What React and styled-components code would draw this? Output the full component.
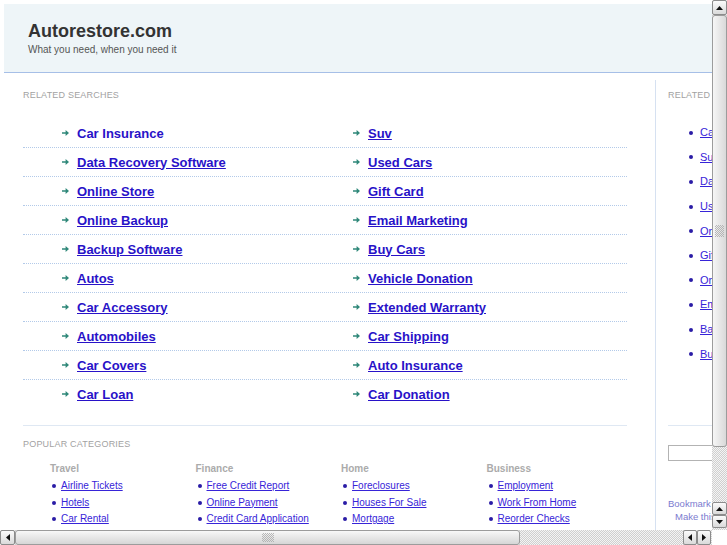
import React from "react";
import styled, { createGlobalStyle } from "styled-components";

const Global = createGlobalStyle`
  html, body { margin: 0; padding: 0; background: #fff; overflow: hidden; }
  body { font-family: "Liberation Sans", Arial, sans-serif; }
  * { box-sizing: border-box; }
`;

const Window = styled.div`
  width: 727px;
  height: 545px;
  display: grid;
  grid-template-columns: 712px 15px;
  grid-template-rows: 530px 15px;
  background: #fff;
`;

const Viewport = styled.div`
  overflow: hidden;
`;

const Page = styled.div`
  width: 980px;
`;

const Header = styled.header`
  margin: 4px 0 0 4px;
  background: #eef5f8;
  border-bottom: 1px solid #a6bfe7;
  padding: 16px 0 15px 24px;
`;

const Title = styled.h1`
  margin: 0;
  font-size: 18px;
  line-height: 22px;
  font-weight: bold;
  color: #333;
`;

const Tagline = styled.div`
  font-size: 10px;
  line-height: 14px;
  padding-top: 1px;
  color: #555;
`;

const Body = styled.div`
  display: flex;
  align-items: flex-start;
`;

const Main = styled.main`
  margin-left: 23px;
  width: 604px;
  padding-top: 16px;
  flex: none;
`;

const SectionLabel = styled.div`
  font-size: 9px;
  line-height: 12px;
  color: #a2a2a2;
  text-transform: uppercase;
  letter-spacing: 0.2px;
  white-space: nowrap;
  margin-top: ${(p) => p.$top || 0}px;
`;

const RelatedList = styled.div`
  margin-top: 18px;
`;

const Row = styled.div`
  display: grid;
  grid-template-columns: 291px 1fr;
  height: 29px;
  border-bottom: 1px dotted #b3cae9;
  &:last-child {
    height: 28px;
    border-bottom: none;
  }
`;

const Cell = styled.div`
  display: flex;
  align-items: center;
  padding-left: 39px;
`;

const ArrowIcon = styled.svg`
  width: 7px;
  height: 6px;
  margin-right: 8px;
  flex: none;
`;

const BigLink = styled.a`
  font-size: 13px;
  font-weight: bold;
  color: #2812c8;
  text-decoration: ${(p) => (p.$plain ? "none" : "underline")};
  white-space: nowrap;
  cursor: pointer;
`;

const Rule = styled.div`
  height: 1px;
  background: #dfe8f3;
  margin-top: ${(p) => p.$top}px;
`;

const CatGrid = styled.div`
  margin-top: 11px;
  padding-left: 27px;
  display: grid;
  grid-template-columns: repeat(4, 145.5px);
`;

const CatHeading = styled.div`
  font-size: 10px;
  line-height: 16.5px;
  font-weight: bold;
  color: #ababab;
`;

const CatList = styled.ul`
  list-style: none;
  margin: 0;
  padding: 0;
`;

const CatItem = styled.li`
  display: flex;
  align-items: center;
  height: 16.5px;
`;

const Bullet = styled.span`
  width: 4px;
  height: 4px;
  border-radius: 50%;
  background: #2a1ca6;
  flex: none;
  margin: 1px ${(p) => p.$gap}px 0 ${(p) => p.$left}px;
`;

const SmallLink = styled.a`
  font-size: ${(p) => p.$size || 10}px;
  color: #3724d8;
  text-decoration: underline;
  white-space: nowrap;
  cursor: pointer;
`;

const Sidebar = styled.aside`
  margin: 7px 0 0 28px;
  border-left: 1px solid #d6e1f1;
  padding: 9px 0 0 12px;
  width: 230px;
  min-height: 470px;
  flex: none;
`;

const SideList = styled.ul`
  list-style: none;
  margin: 19px 0 0;
  padding: 0 0 0 21px;
`;

const SideItem = styled.li`
  display: flex;
  align-items: center;
  height: 24.6px;
`;

const SearchInput = styled.input`
  display: block;
  margin-top: 19px;
  width: 150px;
  height: 16px;
  border: 1px solid #b3b3b3;
  padding: 0;
`;

const SideNote = styled.div`
  font-size: 9.5px;
  line-height: 13px;
  color: #7b7bcf;
  white-space: nowrap;
  margin-top: ${(p) => p.$top || 0}px;
  padding-left: ${(p) => p.$indent || 0}px;
`;

/* Scrollbars */
const trackPattern = `
  background-color: #ececec;
  background-image: repeating-conic-gradient(#cfcfcf 0 25%, #f4f4f4 0 50%);
  background-size: 2px 2px;
`;

const VBar = styled.div`
  display: flex;
  flex-direction: column;
  ${trackPattern}
`;

const HBar = styled.div`
  display: flex;
  ${trackPattern}
`;

const Corner = styled.div`
  background: #fff;
`;

const ScrollButton = styled.div`
  flex: none;
  width: ${(p) => p.$w}px;
  height: ${(p) => p.$h}px;
  border: 1px solid #8c8c8c;
  border-radius: 2px;
  background: linear-gradient(#fbfbfb, #dadada);
  display: flex;
  align-items: center;
  justify-content: center;
`;

const Thumb = styled.div`
  flex: none;
  width: ${(p) => p.$w};
  height: ${(p) => p.$h};
  border: 1px solid #9c9c9c;
  border-radius: 3px;
  background: ${(p) =>
    p.$vertical
      ? "linear-gradient(90deg, #f6f6f6, #d9d9d9)"
      : "linear-gradient(#f8f8f8, #d6d6d6)"};
  display: flex;
  align-items: center;
  justify-content: center;
`;

const Grip = styled.div`
  width: ${(p) => p.$w}px;
  height: ${(p) => p.$h}px;
  background-image: repeating-conic-gradient(#a9a9a9 0 25%, transparent 0 50%);
  background-size: 2px 2px;
  opacity: 0.8;
`;

const TrackFill = styled.div`
  flex: 1;
`;

const Spacer = styled.div`
  flex: none;
  width: ${(p) => p.$w || 0}px;
  height: ${(p) => p.$h || 0}px;
`;

const Tri = ({ dir }) => {
  const pts = {
    up: "0,4 3.5,0 7,4",
    down: "0,0 3.5,4 7,0",
    left: "4,0 0,3.5 4,7",
    right: "0,0 4,3.5 0,7",
  }[dir];
  const vert = dir === "up" || dir === "down";
  return (
    <svg width={vert ? 7 : 4} height={vert ? 4 : 7} viewBox={vert ? "0 0 7 4" : "0 0 4 7"}>
      <polygon points={pts} fill="#111" />
    </svg>
  );
};

const Arrow = () => (
  <ArrowIcon viewBox="0 0 7 6">
    <path d="M0 2.2h3.6V0L7 3 3.6 6V3.8H0z" fill="#2f8879" />
  </ArrowIcon>
);

const related = [
  ["Car Insurance", "Suv"],
  ["Data Recovery Software", "Used Cars"],
  ["Online Store", "Gift Card"],
  ["Online Backup", "Email Marketing"],
  ["Backup Software", "Buy Cars"],
  ["Autos", "Vehicle Donation"],
  ["Car Accessory", "Extended Warranty"],
  ["Automobiles", "Car Shipping"],
  ["Car Covers", "Auto Insurance"],
  ["Car Loan", "Car Donation"],
];

const sideLinks = [
  "Car Insurance",
  "Suv",
  "Data Recovery Software",
  "Used Cars",
  "Online Store",
  "Gift Card",
  "Online Backup",
  "Email Marketing",
  "Backup Software",
  "Buy Cars",
];

const categories = [
  { name: "Travel", links: ["Airline Tickets", "Hotels", "Car Rental"] },
  { name: "Finance", links: ["Free Credit Report", "Online Payment", "Credit Card Application"] },
  { name: "Home", links: ["Foreclosures", "Houses For Sale", "Mortgage"] },
  { name: "Business", links: ["Employment", "Work From Home", "Reorder Checks"] },
];

export default function App() {
  return (
    <>
      <Global />
      <Window>
        <Viewport>
          <Page>
            <Header>
              <Title>Autorestore.com</Title>
              <Tagline>What you need, when you need it</Tagline>
            </Header>
            <Body>
              <Main>
                <SectionLabel>Related Searches</SectionLabel>
                <RelatedList>
                  {related.map((pair, i) => (
                    <Row key={i}>
                      {pair.map((label, j) => (
                        <Cell key={j}>
                          <Arrow />
                          <BigLink $plain={i === 0 && j === 0}>{label}</BigLink>
                        </Cell>
                      ))}
                    </Row>
                  ))}
                </RelatedList>
                <Rule $top={17} />
                <SectionLabel $top={12}>Popular Categories</SectionLabel>
                <CatGrid>
                  {categories.map((c) => (
                    <div key={c.name}>
                      <CatHeading>{c.name}</CatHeading>
                      <CatList>
                        {c.links.map((l) => (
                          <CatItem key={l}>
                            <Bullet $left={2} $gap={5} />
                            <SmallLink>{l}</SmallLink>
                          </CatItem>
                        ))}
                      </CatList>
                    </div>
                  ))}
                </CatGrid>
              </Main>
              <Sidebar>
                <SectionLabel>Related Searches</SectionLabel>
                <SideList>
                  {sideLinks.map((l) => (
                    <SideItem key={l}>
                      <Bullet $left={0} $gap={7} />
                      <SmallLink $size={11}>{l}</SmallLink>
                    </SideItem>
                  ))}
                </SideList>
                <Rule $top={59} />
                <SearchInput type="text" />
                <SideNote $top={36}>Bookmark this page</SideNote>
                <SideNote $indent={7}>Make this your homepage</SideNote>
              </Sidebar>
            </Body>
          </Page>
        </Viewport>
        <VBar>
          <ScrollButton $w={15} $h={15}>
            <Tri dir="up" />
          </ScrollButton>
          <Thumb $vertical $w="15px" $h="432px">
            <Grip $w={9} $h={12} />
          </Thumb>
          <TrackFill />
          <ScrollButton $w={15} $h={13}>
            <Tri dir="up" />
          </ScrollButton>
          <ScrollButton $w={15} $h={13}>
            <Tri dir="down" />
          </ScrollButton>
          <Spacer $h={2} />
        </VBar>
        <HBar>
          <ScrollButton $w={15} $h={15}>
            <Tri dir="left" />
          </ScrollButton>
          <Thumb $w="505px" $h="15px">
            <Grip $w={12} $h={9} />
          </Thumb>
          <TrackFill />
          <ScrollButton $w={14} $h={15}>
            <Tri dir="left" />
          </ScrollButton>
          <ScrollButton $w={14} $h={15}>
            <Tri dir="right" />
          </ScrollButton>
          <Spacer $w={1} />
        </HBar>
        <Corner />
      </Window>
    </>
  );
}
